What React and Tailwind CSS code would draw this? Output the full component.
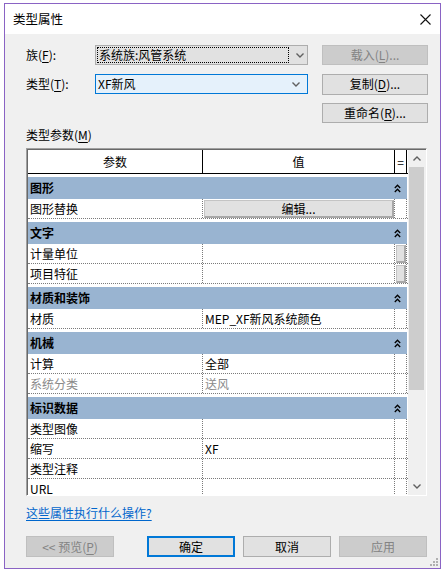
import React from 'react'

const FONT = { fontFamily: '"Noto Sans CJK SC", "Noto Sans", sans-serif' }

const GROUPS = [
  { title: '图形', rows: [{ name: '图形替换', button: '编辑...' }] },
  { title: '文字', rows: [{ name: '计量单位', mini: true }, { name: '项目特征', mini: true }] },
  { title: '材质和装饰', rows: [{ name: '材质', value: 'MEP_XF新风系统颜色' }] },
  { title: '机械', rows: [{ name: '计算', value: '全部' }, { name: '系统分类', value: '送风', muted: true }] },
  { title: '标识数据', rows: [{ name: '类型图像' }, { name: '缩写', value: 'XF' }, { name: '类型注释' }, { name: 'URL' }] },
]

function Chevron({ up = false, className = '' }) {
  return (
    <svg width="8" height="5" viewBox="0 0 8 5" className={className}>
      <path d={up ? 'M0.5 4.5 L4 1 L7.5 4.5' : 'M0.5 0.5 L4 4 L7.5 0.5'} fill="none" stroke="currentColor" strokeWidth="1.4" />
    </svg>
  )
}

function Collapse() {
  return (
    <svg width="7" height="9" viewBox="0 0 7 9">
      <path d="M0.8 4 L3.5 1.2 L6.2 4 M0.8 8 L3.5 5.2 L6.2 8" fill="none" stroke="#000" strokeWidth="1.3" />
    </svg>
  )
}

function Key({ children }) {
  return <span className="underline underline-offset-2">{children}</span>
}

function Btn({ children, disabled = false, primary = false, className = '' }) {
  return (
    <div
      className={`flex items-center justify-center text-[12px] ${
        disabled
          ? 'bg-[#cccccc] border border-[#bfbfbf] text-[#838383]'
          : primary
            ? 'bg-[#e1e1e1] border-2 border-[#0078d7] text-black'
            : 'bg-[#e1e1e1] border border-[#adadad] text-black'
      } ${className}`}
    >
      {children}
    </div>
  )
}

function DataRow({ row }) {
  return (
    <div className="flex h-[20px] border-b border-dotted border-[#7a7a7a] leading-[19px]">
      <div className={`w-[175px] shrink-0 pl-[2px] border-r border-dotted border-[#7a7a7a] ${row.muted ? 'text-[#8a8a8a]' : ''}`}>
        {row.name}
      </div>
      <div className={`w-[192px] shrink-0 border-r border-dotted border-[#7a7a7a] ${row.button ? 'p-[1px]' : 'pl-[2px]'} ${row.muted ? 'text-[#8a8a8a]' : ''}`}>
        {row.button ? (
          <div className="h-[18px] w-[190px] bg-[#e1e1e1] border border-[#c4c4c4] border-r-2 border-b-2 border-r-[#a8a8a8] border-b-[#a8a8a8] flex items-center justify-center leading-none">
            {row.button}
          </div>
        ) : (
          row.value
        )}
      </div>
      <div className="w-[12px] shrink-0 border-r border-dotted border-[#7a7a7a] p-[1px]">
        {row.mini && (
          <div className="h-[18px] w-[10px] bg-[#e1e1e1] border border-[#c4c4c4] border-r-2 border-b-2 border-r-[#a8a8a8] border-b-[#a8a8a8]" />
        )}
      </div>
    </div>
  )
}

export default function App() {
  return (
    <div className="w-[446px] h-[573px] bg-white pl-[4px] pt-[3px] text-[12px] text-black" style={FONT}>
      <div className="relative w-[437px] h-[566px] border border-[#8a63c4] flex flex-col">
        {/* title bar */}
        <div className="h-[30px] shrink-0 bg-white flex items-center justify-between pl-[8px] pr-[9px]">
          <span className="text-[12.5px]">类型属性</span>
          <svg width="11" height="11" viewBox="0 0 11 11">
            <path d="M0.5 0.5 L10.5 10.5 M10.5 0.5 L0.5 10.5" stroke="#111" strokeWidth="1.1" />
          </svg>
        </div>

        <div className="flex-1 bg-[#f0f0f0] pl-[21px] pt-[11px]">
          {/* family */}
          <div className="flex items-center h-[20px]">
            <div className="w-[69px]">族(<Key>F</Key>):</div>
            <div className="w-[213px] h-[20px] bg-[#e1e1e1] border border-[#adadad] flex items-center p-[1px]">
              <div className="w-[192px] h-[16px] border border-dotted border-black flex items-center pl-[1px] leading-none">
                系统族:风管系统
              </div>
              <Chevron className="ml-[7px] text-[#606060]" />
            </div>
            <Btn disabled className="ml-[14px] w-[106px] h-[20px]">载入(<Key>L</Key>)...</Btn>
          </div>

          {/* type */}
          <div className="flex items-center h-[20px] mt-[9px]">
            <div className="w-[69px]">类型(<Key>T</Key>):</div>
            <div className="w-[213px] h-[20px] bg-[#e5f1fb] border border-[#0078d7] flex items-center justify-between pl-[2px] pr-[7px] leading-none">
              <span>XF新风</span>
              <Chevron className="text-[#606060]" />
            </div>
            <Btn className="ml-[14px] w-[106px] h-[21px]">复制(<Key>D</Key>)...</Btn>
          </div>

          <div className="flex h-[20px] mt-[9px]">
            <Btn className="ml-[296px] w-[106px] h-[20px]">重命名(<Key>R</Key>)...</Btn>
          </div>

          <div className="mt-[4px] h-[16px] leading-[16px]">类型参数(<Key>M</Key>)</div>

          {/* parameter table */}
          <div className="mt-[5px] w-[401px] h-[348px] border-t border-l border-[#a0a0a0] border-r border-b border-r-white border-b-white">
            <div className="h-full border-t border-l border-[#696969] flex">
              <div className="w-[380px] h-full bg-white overflow-hidden">
                <div className="flex h-[24px] border-b border-black leading-[23px] text-center">
                  <div className="w-[175px] border-r border-black">参数</div>
                  <div className="w-[192px] border-r border-black">值</div>
                  <div className="w-[12px] border-r border-black">=</div>
                </div>
                {GROUPS.map(g => (
                  <div key={g.title}>
                    <div className="h-[3px]" />
                    <div className="w-[379px] h-[22px] bg-[#99b4d1] flex items-center justify-between pl-[2px] pr-[6px] font-bold">
                      <span>{g.title}</span>
                      <Collapse />
                    </div>
                    {g.rows.map(r => (
                      <DataRow key={r.name} row={r} />
                    ))}
                  </div>
                ))}
              </div>
              {/* scrollbar */}
              <div className="w-[18px] h-full bg-[#f0f0f0] flex flex-col">
                <div className="h-[17px] flex items-center justify-center text-[#606060]">
                  <Chevron up />
                </div>
                <div className="ml-[1px] w-[15px] h-[223px] bg-[#cdcdcd]" />
                <div className="flex-1" />
                <div className="h-[17px] flex items-center justify-center text-[#606060]">
                  <Chevron />
                </div>
              </div>
            </div>
          </div>

          <div className="mt-[9px] h-[16px] leading-[16px]">
            <span className="text-[#0066cc] underline underline-offset-2">这些属性执行什么操作?</span>
          </div>

          {/* footer buttons */}
          <div className="mt-[15px] flex">
            <Btn disabled className="w-[88px] h-[21px]">&lt;&lt; 预览(<Key>P</Key>)</Btn>
            <Btn primary className="ml-[33px] w-[88px] h-[21px]">确定</Btn>
            <Btn className="ml-[8px] w-[88px] h-[21px]">取消</Btn>
            <Btn disabled className="ml-[8px] w-[88px] h-[21px]">应用</Btn>
          </div>
        </div>

        {/* resize grip */}
        <svg width="8" height="8" viewBox="0 0 8 8" className="absolute right-[2px] bottom-[2px]">
          <rect x="6" y="0" width="2" height="2" fill="#b0b0b0" />
          <rect x="3" y="3" width="2" height="2" fill="#b0b0b0" />
          <rect x="6" y="3" width="2" height="2" fill="#b0b0b0" />
          <rect x="0" y="6" width="2" height="2" fill="#b0b0b0" />
          <rect x="3" y="6" width="2" height="2" fill="#b0b0b0" />
          <rect x="6" y="6" width="2" height="2" fill="#b0b0b0" />
        </svg>
      </div>
    </div>
  )
}
